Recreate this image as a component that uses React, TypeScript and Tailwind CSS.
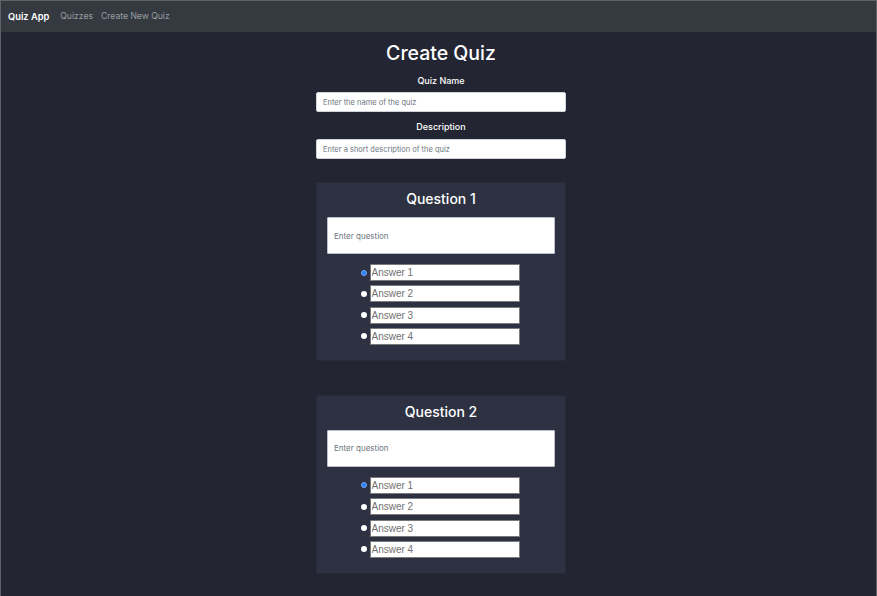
import React from "react";

function Answer({ n, checked }: { n: number; checked?: boolean }) {
  return (
    <div className="flex items-center gap-[3px] h-[17px]">
      <span
        className={
          "block w-[6px] h-[6px] rounded-full " +
          (checked ? "bg-[#2f7ff5] border border-[#6fa8ff]" : "bg-white")
        }
      />
      <input
        readOnly
        placeholder={`Answer ${n}`}
        className="w-[150px] h-[17px] bg-white border border-[#7a7a7a] px-[1px] text-[10px] text-black placeholder:text-[#707070] outline-none"
        style={{ fontFamily: '"Liberation Sans", Arial, sans-serif' }}
      />
    </div>
  );
}

function QuestionCard({ n }: { n: number }) {
  return (
    <div className="w-[248px] bg-[#2d3142] shadow-[0_0_0_1px_#272b38] pt-[6px] pb-[15px] px-[10px] flex flex-col items-center">
      <div className="text-[14px] leading-[20px] text-white font-medium">Question {n}</div>
      <input
        readOnly
        placeholder="Enter question"
        className="mt-[8px] w-[228px] h-[37px] bg-white border border-[#b9c0cc] rounded-[1px] px-[6px] text-[8px] placeholder:text-[#6c757d] outline-none"
      />
      <div className="mt-[10px] mr-[2px] flex flex-col gap-[4.33px]">
        <Answer n={1} checked />
        <Answer n={2} />
        <Answer n={3} />
        <Answer n={4} />
      </div>
    </div>
  );
}

export default function App() {
  return (
    <div
      className="w-[877px] h-[596px] overflow-hidden bg-[#232632] border-x border-t border-[#5f6268] flex flex-col"
      style={{ fontFamily: 'Inter, "Noto Sans", sans-serif' }}
    >
      <nav className="h-[31px] shrink-0 bg-[#343a40] flex items-center px-[7px] gap-[11px]">
        <span className="text-white text-[9.3px] font-semibold">Quiz App</span>
        <span className="text-[#9a9ea3] text-[8.6px]">Quizzes</span>
        <span className="text-[#9a9ea3] text-[8.6px] -ml-[3px]">Create New Quiz</span>
      </nav>
      <div className="flex flex-col items-center pl-[5px]">
        <h1 className="mt-[8px] text-[19.5px] leading-[26px] font-medium text-white">Create Quiz</h1>
        <label className="mt-[8px] text-[9px] leading-[14px] font-medium text-white">Quiz Name</label>
        <input
          readOnly
          placeholder="Enter the name of the quiz"
          className="mt-[4px] w-[250px] h-[20px] bg-white border border-[#ced4da] rounded-[2px] px-[6px] text-[7.5px] placeholder:text-[#6c757d] outline-none"
        />
        <label className="mt-[8px] text-[9px] leading-[14px] font-medium text-white">Description</label>
        <input
          readOnly
          placeholder="Enter a short description of the quiz"
          className="mt-[5px] w-[250px] h-[20px] bg-white border border-[#ced4da] rounded-[2px] px-[6px] text-[7.5px] placeholder:text-[#6c757d] outline-none"
        />
        <div className="mt-[24px]">
          <QuestionCard n={1} />
        </div>
        <div className="mt-[36px]">
          <QuestionCard n={2} />
        </div>
      </div>
    </div>
  );
}
